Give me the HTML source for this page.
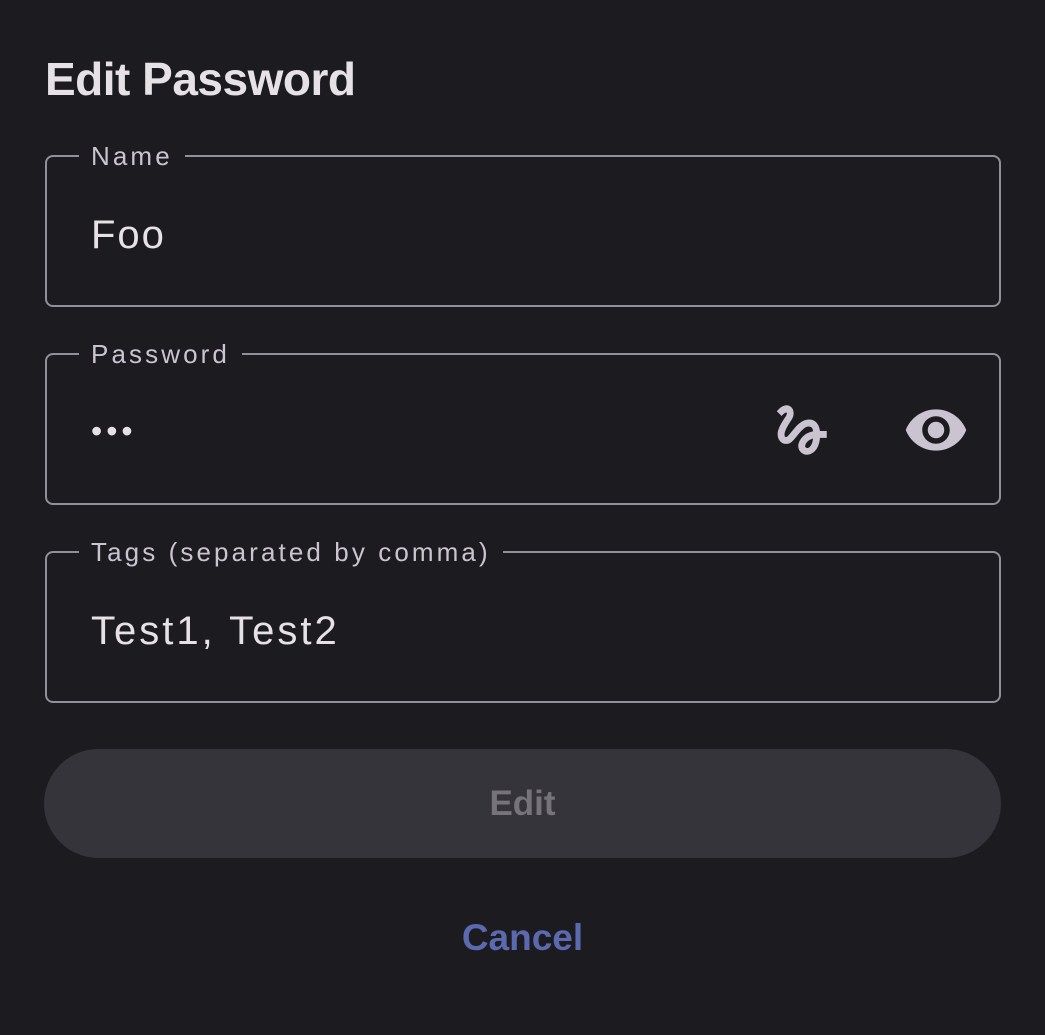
<!DOCTYPE html>
<html><head><style>
body{margin:0;width:1045px;height:1035px;background:#1c1b20;font-family:"Liberation Sans",sans-serif;position:relative;overflow:hidden}
h1{position:absolute;left:45px;top:52px;margin:0;font-size:46px;font-weight:bold;color:#e6e1e5;letter-spacing:-0.5px}
.f{position:absolute;left:45px;width:952px;height:148px;border:2px solid #938f99;border-radius:8px;box-sizing:content-box}
.f .l{position:absolute;left:32px;top:-18px;padding:0 12px;background:#1c1b20;color:#cac4d0;font-size:26px;letter-spacing:3.1px;line-height:34px}
.f .v{position:absolute;left:44px;top:54px;font-size:40px;color:#e6e1e5;line-height:48px;letter-spacing:3px}
.btn{position:absolute;left:44px;top:749px;width:957px;height:109px;border-radius:55px;background:#36343b;color:#76747a;font-size:35px;font-weight:bold;text-align:center;line-height:109px}
.c{position:absolute;left:0;width:1045px;top:917px;text-align:center;color:#5b69ae;font-size:37px;font-weight:bold}
svg{position:absolute;fill:#cac4d0}
</style></head><body>
<h1>Edit Password</h1>
<div class="f" style="top:155px"><div class="l">Name</div><div class="v" style="letter-spacing:2px">Foo</div></div>
<div class="f" style="top:353px"><div class="l">Password</div><div class="v" style="top:52px;font-size:32px;letter-spacing:4px">•••</div>
<svg style="left:722px;top:42px" width="66" height="66" viewBox="0 0 24 24"><path d="M4.59 6.89c.7-.71 1.4-1.35 1.71-1.22.5.2 0 1.030-.3 1.52-.25.42-2.86 3.89-2.86 6.310 0 1.28.48 2.34 1.34 2.98.75.56 1.74.73 2.64.46 1.07-.31 1.950-1.4 3.06-2.77 1.21-1.49 2.83-3.440 4.080-3.44 1.63 0 1.65 1.01 1.76 1.79-3.78.64-5.380 3.67-5.38 5.37 0 1.7 1.44 3.09 3.21 3.09 1.63 0 4.29-1.33 4.69-6.1H21v-2.5h-2.47c-.15-1.65-1.09-4.2-4.03-4.2-2.25 0-4.18 1.91-4.94 2.84-.58.73-2.06 2.48-2.29 2.72-.25.3-.68.84-1.11.84-.45 0-.72-.83-.36-1.92.35-1.09 1.4-2.86 1.85-3.52.78-1.14 1.3-1.92 1.3-3.28C8.95 3.69 7.31 3 6.44 3 5.12 3 3.97 4 3.72 4.25c-.36.36-.66.66-.88.93l1.75 1.71zm9.29 11.66c-.31 0-.74-.26-.74-.72 0-.6.73-2.2 2.87-2.76-.3 2.69-1.43 3.48-2.130 3.48z"/></svg>
<svg style="left:856px;top:42px" width="66" height="66" viewBox="0 0 24 24"><path d="M12 4.5C7 4.5 2.73 7.61 1 12c1.73 4.39 6 7.5 11 7.5s9.27-3.11 11-7.5c-1.73-4.39-6-7.5-11-7.5zM12 17c-2.76 0-5-2.24-5-5s2.24-5 5-5 5 2.24 5 5-2.24 5-5 5zm0-8c-1.66 0-3 1.34-3 3s1.340 3 3 3 3-1.34 3-3-1.34-3-3-3z"/></svg>
</div>
<div class="f" style="top:551px"><div class="l">Tags (separated by comma)</div><div class="v">Test1, Test2</div></div>
<div class="btn">Edit</div>
<div class="c">Cancel</div>
</body></html>
